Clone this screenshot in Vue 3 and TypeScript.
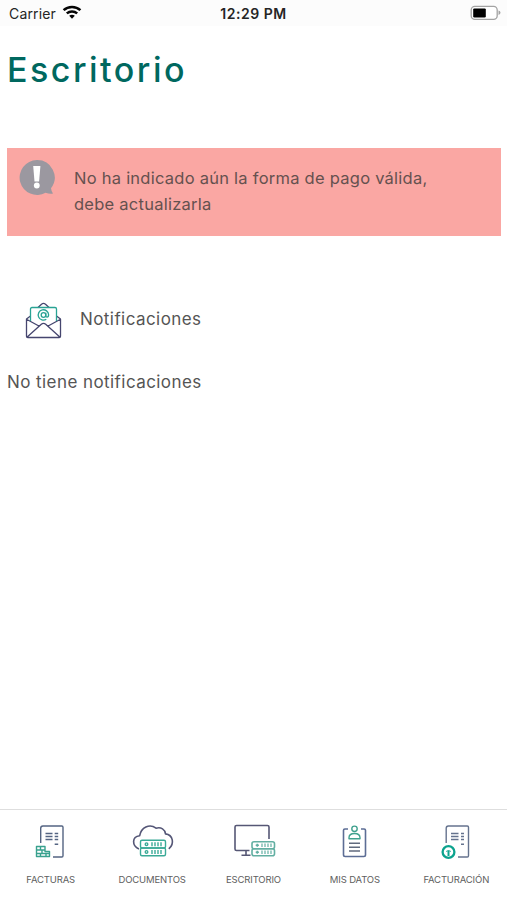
<script setup lang="ts">
interface Tab {
  id: string
  label: string
}

const tabs: Tab[] = [
  { id: 'facturas', label: 'FACTURAS' },
  { id: 'documentos', label: 'DOCUMENTOS' },
  { id: 'escritorio', label: 'ESCRITORIO' },
  { id: 'datos', label: 'MIS DATOS' },
  { id: 'facturacion', label: 'FACTURACIÓN' },
]
</script>

<template>
  <div class="screen">
    <header class="status">
      <div class="carrier">
        <span>Carrier</span>
        <svg class="wifi" width="20" height="14" viewBox="0 0 20 14" fill="none" stroke="#050505" stroke-width="2.5">
          <path d="M1.6 5.2C6.2 .9 13.8 .9 18.4 5.2" />
          <path d="M4.8 8.4C7.8 5.8 12.2 5.8 15.2 8.4" />
          <path d="M7.2 10.7C8.8 9.4 11.2 9.4 12.8 10.7L10 13.8Z" fill="#050505" stroke="none" />
        </svg>
      </div>
      <span class="time">12:29 PM</span>
      <svg class="battery" width="32" height="16" viewBox="0 0 32 16">
        <rect x="2.2" y="1.4" width="26" height="13" rx="3.6" fill="#fff" stroke="#a3a3a3" stroke-width="1.3" />
        <rect x="4.2" y="3.4" width="12.6" height="9" rx="1.2" fill="#000" />
        <path d="M29.500 5.600Q31.500 6.200 31.500 7.800T29.500 10Z" fill="#a3a3a3" />
      </svg>
    </header>

    <main>
      <h1>Escritorio</h1>

      <section class="alert">
        <svg width="37" height="37" viewBox="0 0 37 37">
          <path d="M17.800 1a17.500 17.500 0 1 0 8.800 32.800q3.800 1.400 7.400.8-1.600-2.200-2-5.400A17.500 17.500 0 0 0 17.800 1Z" fill="#9b98a0" />
          <path d="M14.200 7h7.200l-1.300 15.400h-4.600Z" fill="#fff" />
          <circle cx="17.800" cy="26.500" r="2.900" fill="#fff" />
        </svg>
        <p>
          <span class="line">No ha indicado aún la forma de pago válida,</span>
          <span class="line">debe actualizarla</span>
        </p>
      </section>

      <section class="heading">
        <svg width="38" height="38" viewBox="0 0 38 38" fill="none" stroke-width="1.300" stroke-linejoin="round">
          <g stroke="#46466f">
            <path d="M14 5.500l3.500-3.300q2-1.500 4 0l3.500 3.300" />
            <path d="M6.500 14L2.500 17v17.200q0 1.300 1.300 1.300h31.400q1.300 0 1.300-1.300V17L32.500 14M2.500 17.200l13.300 7.300M36.500 17.200l-13.300 7.300M3.200 35l14.100-12.800q2.200-1.800 4.400 0L35.800 35" />
          </g>
          <g stroke="#29a394">
            <path d="M6.500 19V7q0-1.500 1.500-1.500h23Q32.500 5.500 32.500 7v12" />
            <circle cx="19.500" cy="13" r="2.300" />
            <path d="M21.800 10.700v3.100q0 1.300 1.200 1.300 1.600 0 1.600-2.300a5.200 5.200 0 1 0-2.300 4.500" />
          </g>
        </svg>
        <h2>Notificaciones</h2>
      </section>
      <p class="empty">No tiene notificaciones</p>
    </main>

    <nav>
      <button v-for="tab in tabs" :key="tab.id" type="button">
        <svg width="44" height="38" viewBox="0 0 44 38" fill="none" stroke-width="1.400" stroke-linejoin="round">
          <template v-if="tab.id === 'facturas'">
            <path d="M11.700 20V5.200q0-2.200 2.200-2.200h18.900q1.200 0 1.200 1.200v28.600q0 1.200-1.200 1.200H24" stroke="#546482" />
            <path d="M16.500 10.500h7M16.500 13.500h7M16.500 16.500h7M25.700 10.500h3.500M25.700 13.500h3.500M25.700 16.500h3.500M25.700 21.300h3.500" stroke="#546482" />
            <path d="M7.500 23.500h8.500v5h4.500v5h-13zM7.500 27h8.500M7.500 30.500h13M11.500 23.500v3.500M13 27v3.500M11.500 30.500v3M17 30.500v3" stroke="#38a18e" />
          </template>

          <template v-else-if="tab.id === 'documentos'">
            <path d="M8 26C.8 23 .6 13.500 8.700 12.700 10 4.500 18.500.2 25 5.200c5.200-1.400 9 1.200 9.500 5.700 7.600 1 9.300 9.800 3.300 15" stroke="#555777" stroke-width="1.600" />
            <g stroke="#3aaa97">
              <rect x="9.500" y="17.200" width="25" height="7.800" rx="1.500" />
              <rect x="9.500" y="25" width="25" height="7.800" rx="1.500" />
              <circle cx="15.500" cy="21.200" r="1.300" /><circle cx="15.500" cy="28.900" r="1.300" />
              <path d="M21 19.200v4M24 19.200v4M27 19.200v4M30 19.200v4M21 26.900v4M24 26.900v4M27 26.900v4M30 26.900v4" />
            </g>
          </template>

          <template v-else-if="tab.id === 'escritorio'">
            <path d="M17.500 27.500H4.500q-1.500 0-1.500-1.500V4q0-1.500 1.500-1.500h31Q37 2.500 37 4v12M14 27.500v4.200M9.500 32.200h9" stroke="#565775" stroke-width="1.600" />
            <g stroke="#62afa2" stroke-width="1.600">
              <rect x="20" y="18.700" width="22.500" height="7" rx="2" />
              <rect x="20" y="25.700" width="22.500" height="7" rx="2" />
              <path d="M23.700 22.200h3.200M25.300 20.700v3M23.700 29.200h3.200M25.300 27.700v3" />
              <path d="M30 20.500v3.500M33 20.500v3.500M36 20.500v3.500M39 20.500v3.500M30 27.500v3.500M33 27.500v3.500M36 27.500v3.500M39 27.500v3.500" stroke-width="1.200" />
            </g>
          </template>

          <template v-else-if="tab.id === 'datos'">
            <path d="M15 6h-3.100q-1.400 0-1.400 1.200v24.600q0 1.700 1.700 1.700h18.600q1.700 0 1.700-1.700V7.200Q32.500 6 31.100 6h-3.100" stroke="#5c6d95" stroke-width="1.600" />
            <path d="M16 20.300h11M16 24.300h11M16 28.100h11" stroke="#606a7e" stroke-width="1.500" />
            <circle cx="21.500" cy="5.800" r="2.700" stroke="#40a18e" />
            <path d="M16 15.800v-1q0-4.300 5.500-4.300t5.500 4.300v1z" stroke="#40a18e" />
          </template>

          <template v-else>
            <path d="M11.200 20V5.200q0-2.200 2.200-2.200h18.900q1.200 0 1.200 1.200v28.600q0 1.200-1.200 1.200H23" stroke="#65738e" />
            <path d="M16 10.500h7.500M16 13.500h7.500M16 16.500h7.500M26 10.500h3M26 13.500h3M26 16.500h3M26 21.300h3" stroke="#65738e" />
            <circle cx="13.500" cy="29" r="5.900" stroke="#0ca38e" stroke-width="2.300" />
            <path d="M13.500 33v-5.500" stroke="#0ca38e" stroke-width="2" />
            <path d="M11 28.500q2.500-2 5 0" stroke="#0ca38e" stroke-width=".8" />
          </template>
        </svg>
        <span>{{ tab.label }}</span>
      </button>
    </nav>
  </div>
</template>

<style>
body {
  margin: 0;
  background: #fff;
}
</style>

<style scoped>
.screen {
  display: flex;
  flex-direction: column;
  width: 100%;
  height: 100vh;
  overflow: hidden;
  color: #555;
  background: #fff;
  font-family: Inter, "Liberation Sans", sans-serif;
}

.status {
  display: grid;
  grid-template-columns: 1fr auto 1fr;
  align-items: center;
  height: 26px;
  padding: 0 6px 0 9px;
  box-sizing: border-box;
  color: #252525;
  background: #fcfcfc;
  font-size: 14px;
}

.carrier {
  display: flex;
  align-items: center;
  gap: 6px;
  letter-spacing: 0.15px;
}

.wifi {
  margin-top: -2px;
}

.time {
  margin-right: 3px;
  font-weight: 600;
  letter-spacing: 0.5px;
}

.battery {
  justify-self: end;
}

main {
  flex: 1;
  padding: 0 6px 0 7px;
}

h1,
h2,
p {
  margin: 0;
  font-weight: 400;
}

h1 {
  margin-top: 22px;
  color: #00685f;
  font-size: 34px;
  font-weight: 500;
  letter-spacing: 2.5px;
  line-height: 44px;
}

.alert {
  display: flex;
  gap: 18px;
  height: 88px;
  margin-top: 56px;
  padding: 11px 12px;
  box-sizing: border-box;
  color: #65514f;
  background: #faa7a3;
  font-size: 16.5px;
  letter-spacing: 0.25px;
  line-height: 26px;
}

.alert svg,
.heading svg {
  flex: none;
}

.alert p {
  padding-top: 6px;
}

.line {
  display: block;
  white-space: nowrap;
}

.heading {
  display: flex;
  align-items: center;
  gap: 18px;
  margin-top: 66px;
  padding-left: 17px;
}

h2,
.empty {
  font-size: 17px;
  letter-spacing: 0.43px;
  line-height: 26px;
}

h2 {
  margin-top: -5px;
}

.empty {
  margin-top: 29px;
}

nav {
  display: grid;
  grid-template-columns: repeat(5, 1fr);
  height: 91px;
  box-sizing: border-box;
  border-top: 1px solid #dedede;
}

button {
  display: flex;
  flex-direction: column;
  align-items: center;
  gap: 12px;
  min-width: 0;
  padding: 13px 0 0;
  border: 0;
  background: none;
  color: #606060;
  font-family: inherit;
  font-size: 9.5px;
  letter-spacing: -0.15px;
  line-height: 14px;
}

button svg {
  margin-left: 1px;
}
</style>
